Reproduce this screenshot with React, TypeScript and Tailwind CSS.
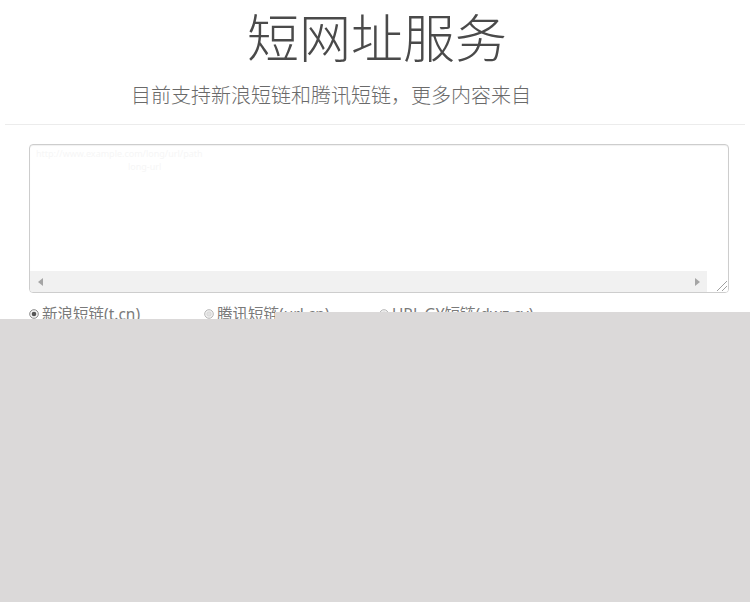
import React from "react";

const font = { fontFamily: '"Noto Sans", "Noto Sans CJK SC", sans-serif' };

function Radio({ checked }: { checked: boolean }) {
  return (
    <svg width="10" height="10" viewBox="0 0 10 10" className="mr-[3px] shrink-0">
      <circle cx="5" cy="5" r="4.3" fill="#f4f4f4" stroke={checked ? "#8a8a8a" : "#b5b5b5"} strokeWidth="1" />
      {checked ? (
        <circle cx="5" cy="5" r="2.3" fill="#555" />
      ) : (
        <circle cx="5" cy="5" r="2.3" fill="#e2e2e2" stroke="#cfcfcf" strokeWidth="0.6" />
      )}
    </svg>
  );
}

export default function App() {
  return (
    <div className="relative w-[750px] h-[602px] bg-white flex flex-col overflow-hidden" style={font}>
      <h1 className="mt-[8px] text-center text-[52px] leading-[60px] font-light text-[#4a4a4a] pl-[4px]">
        短网址服务
      </h1>
      <p className="mt-[14px] pl-[131px] text-[20px] leading-[28px] font-light text-[#6a6a6a]">
        目前支持新浪短链和腾讯短链，更多内容来自
      </p>
      <div className="mt-[14px] mx-[5px] h-px bg-[#ececec]" />

      <div className="mt-[19px] ml-[29px] w-[700px] h-[149px] border border-[#cdcdcd] rounded-[4px] shadow-[inset_0_1px_1px_rgba(0,0,0,0.06)] flex flex-col overflow-hidden">
        <div className="flex-1 flex flex-col gap-[3px] px-[6px] pt-[4px] text-[9px] leading-[10px] text-[#f6f6f6]">
          <div>http://www.example.com/long/url/path</div>
          <div className="pl-[92px]">long-url</div>
        </div>
        <div className="h-[21px] flex items-center bg-[#f1f1f1]">
          <div className="w-[20px] flex justify-center">
            <svg width="5" height="8" viewBox="0 0 5 8">
              <path d="M5 0 L0 4 L5 8 Z" fill="#a5a5a5" />
            </svg>
          </div>
          <div className="flex-1" />
          <div className="w-[20px] flex justify-center">
            <svg width="5" height="8" viewBox="0 0 5 8">
              <path d="M0 0 L5 4 L0 8 Z" fill="#a5a5a5" />
            </svg>
          </div>
          <div className="w-[21px] h-[21px] bg-white flex items-end justify-end">
            <svg width="14" height="14" viewBox="0 0 14 14">
              <path d="M13 3 L3 13 M13 8 L8 13" stroke="#a0a0a0" strokeWidth="1" />
            </svg>
          </div>
        </div>
      </div>

      <div className="relative mt-[9px] h-[17px] overflow-hidden pl-[29px] pt-[1px] flex items-start text-[15.5px] leading-[22px] text-[#7a7a7a]">
        <label className="w-[175px] flex items-center shrink-0">
          <Radio checked />
          新浪短链(t.cn)
        </label>
        <label className="w-[175px] flex items-center shrink-0">
          <Radio checked={false} />
          腾讯短链(url.cn)
        </label>
        <label className="w-[200px] flex items-center shrink-0">
          <Radio checked={false} />
          URL.GY短链(dwz.cy)
        </label>
        <div className="absolute left-[275px] right-0 bottom-0 h-[7px] bg-[#dbd9d9]" />
      </div>
      <div className="flex-1 bg-[#dbd9d9]" />
    </div>
  );
}
